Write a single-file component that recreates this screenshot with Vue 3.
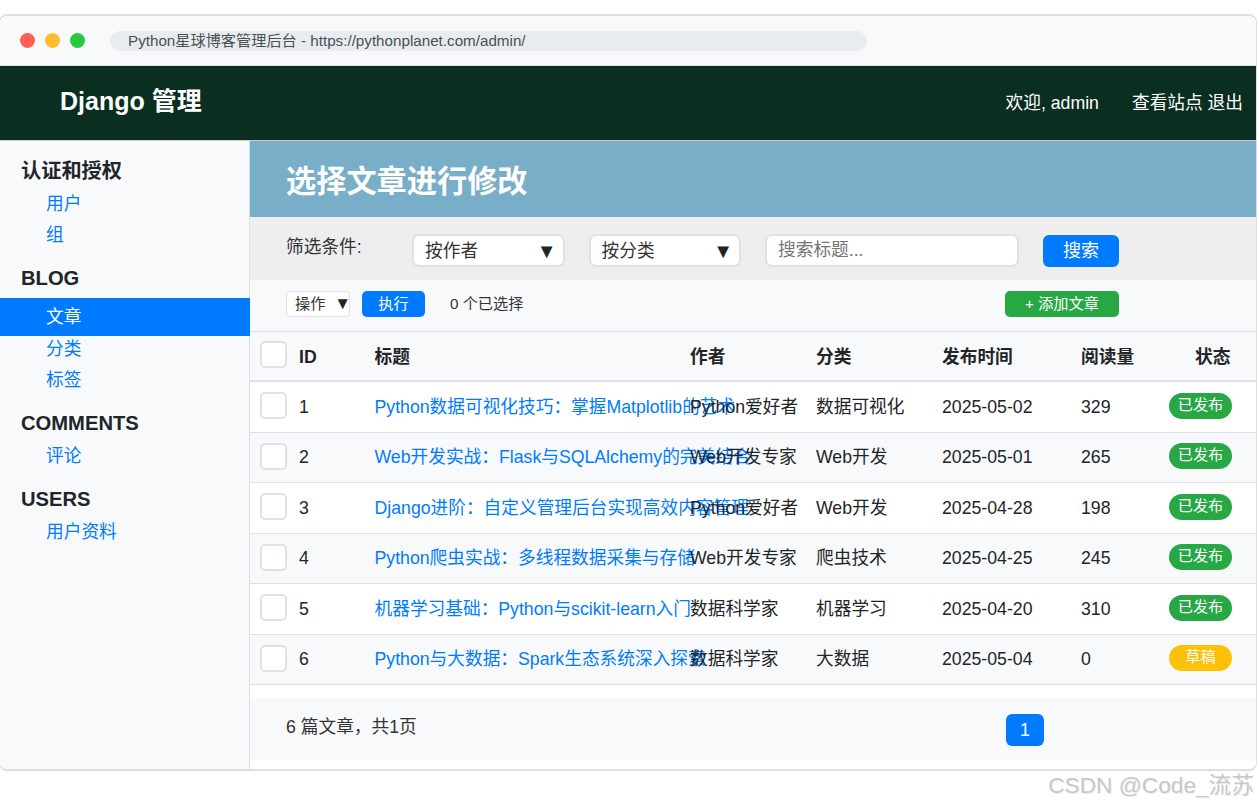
<script setup>
const groups = [
  { title: '认证和授权', links: [{ t: '用户' }, { t: '组' }] },
  { title: 'BLOG', links: [{ t: '文章', active: true }, { t: '分类' }, { t: '标签' }] },
  { title: 'COMMENTS', links: [{ t: '评论' }] },
  { title: 'USERS', links: [{ t: '用户资料' }] },
]
const rows = [
  [1, 'Python数据可视化技巧：掌握Matplotlib的艺术', 'Python爱好者', '数据可视化', '2025-05-02', 329, '已发布'],
  [2, 'Web开发实战：Flask与SQLAlchemy的完美结合', 'Web开发专家', 'Web开发', '2025-05-01', 265, '已发布'],
  [3, 'Django进阶：自定义管理后台实现高效内容管理', 'Python爱好者', 'Web开发', '2025-04-28', 198, '已发布'],
  [4, 'Python爬虫实战：多线程数据采集与存储', 'Web开发专家', '爬虫技术', '2025-04-25', 245, '已发布'],
  [5, '机器学习基础：Python与scikit-learn入门', '数据科学家', '机器学习', '2025-04-20', 310, '已发布'],
  [6, 'Python与大数据：Spark生态系统深入探索', '数据科学家', '大数据', '2025-05-04', 0, '草稿'],
]
</script>

<template>
  <div class="page">
    <div class="window">
      <div class="chrome">
        <span class="dot red"></span>
        <span class="dot yellow"></span>
        <span class="dot green"></span>
        <div class="url">Python星球博客管理后台 - https://pythonplanet.com/admin/</div>
      </div>
      <header class="topbar">
        <div class="logo">Django 管理</div>
        <div class="user">
          <span>欢迎, admin</span>
          <span>查看站点 退出</span>
        </div>
      </header>
      <div class="body">
        <aside class="sidebar">
          <div v-for="g in groups" :key="g.title" class="group">
            <h3>{{ g.title }}</h3>
            <a v-for="l in g.links" :key="l.t" class="side-link" :class="{ active: l.active }">{{ l.t }}</a>
          </div>
        </aside>
        <main class="main">
          <div class="title-bar">选择文章进行修改</div>
          <div class="filters">
            <span class="filter-label">筛选条件:</span>
            <div class="select"><span>按作者</span><span class="arrow">▼</span></div>
            <div class="select"><span>按分类</span><span class="arrow">▼</span></div>
            <div class="search">搜索标题...</div>
            <button class="btn search-btn">搜索</button>
          </div>
          <div class="actions">
            <div class="mini-select"><span>操作</span><span class="mini-arrow">▼</span></div>
            <button class="btn run">执行</button>
            <span class="count">0 个已选择</span>
            <button class="btn add">+ 添加文章</button>
          </div>
          <table class="grid">
            <colgroup>
              <col class="c0" /><col class="c1" /><col class="c2" /><col class="c3" />
              <col class="c4" /><col class="c5" /><col class="c6" /><col class="c7" />
            </colgroup>
            <thead>
              <tr>
                <th><span class="check"></span></th>
                <th>ID</th><th>标题</th><th>作者</th><th>分类</th><th>发布时间</th><th>阅读量</th>
                <th class="status-h">状态</th>
              </tr>
            </thead>
            <tbody>
              <tr v-for="r in rows" :key="r[0]">
                <td><span class="check"></span></td>
                <td>{{ r[0] }}</td>
                <td><a class="title-link">{{ r[1] }}</a></td>
                <td>{{ r[2] }}</td>
                <td>{{ r[3] }}</td>
                <td>{{ r[4] }}</td>
                <td>{{ r[5] }}</td>
                <td><span class="badge" :class="{ draft: r[6] === '草稿' }">{{ r[6] }}</span></td>
              </tr>
            </tbody>
          </table>
          <div class="pager">
            <span class="total">6 篇文章，共1页</span>
            <span class="page-num">1</span>
          </div>
        </main>
      </div>
    </div>
    <div class="watermark">CSDN @Code_流苏</div>
  </div>
</template>

<style>
html, body { margin: 0; background: #fff; overflow: hidden; }
</style>

<style scoped>
.page {
  position: relative;
  width: 1259px;
  height: 806px;
  overflow: hidden;
  background: #fff;
  font-family: "Liberation Sans", "Noto Sans CJK SC", sans-serif;
  font-size: 17.7px;
  line-height: 24px;
  color: #212529;
}
.window {
  box-sizing: border-box;
  width: 1258px;
  height: 757px;
  margin: 14px 0 0 -1px;
  border: 1px solid #dcdee0;
  border-top-width: 2px;
  border-bottom-width: 2px;
  border-radius: 8px;
  background: #fff;
  overflow: hidden;
  display: flex;
  flex-direction: column;
}
.chrome {
  box-sizing: border-box;
  height: 50px;
  flex: none;
  display: flex;
  align-items: center;
  padding-left: 20px;
  background: #f8f9fa;
  border-bottom: 1px solid #dee2e6;
}
.dot { width: 15px; height: 15px; border-radius: 50%; margin-right: 10px; }
.red { background: #ff5f56; }
.yellow { background: #ffbd2e; }
.green { background: #27c93f; }
.url {
  box-sizing: border-box;
  width: 757px;
  height: 20px;
  margin-left: 15px;
  padding-left: 18px;
  border-radius: 10px;
  background: #e9ecef;
  color: #495057;
  font-size: 15.2px;
  line-height: 20px;
}
.topbar {
  flex: none;
  box-sizing: border-box;
  height: 74px;
  background: #0a2e20;
  color: #fff;
  display: flex;
  align-items: center;
  justify-content: space-between;
  padding: 0 13px 0 60px;
}
.logo { font-size: 25px; line-height: 32px; font-weight: 700; margin-top: -5px; }
.user { display: flex; gap: 33px; margin-top: -1px; }
.body { flex: 1; display: flex; min-height: 0; border-top: 1px solid #c9cdd0; }
.sidebar {
  flex: none;
  box-sizing: border-box;
  width: 250px;
  padding-top: 15px;
  background: #f8f9fa;
  border-right: 1px solid #dee2e6;
}
.group { margin-bottom: 13px; }
.group h3 {
  margin: 0 0 2px;
  padding-left: 21px;
  font-size: 20.2px;
  line-height: 30px;
  font-weight: 700;
  color: #212529;
}
.side-link {
  display: block;
  padding: 2px 0 0 46px;
  line-height: 29px;
  color: #007bff;
}
.side-link.active {
  padding-top: 0;
  background: #007bff;
  color: #fff;
  line-height: 38px;
  margin: 5px -1px -3px 0;
}
.main { flex: 1; min-width: 0; background: #fff; }
.title-bar {
  box-sizing: border-box;
  height: 76px;
  padding: 1px 0 0 36px;
  background: #79aec8;
  color: #fff;
  font-size: 30.2px;
  font-weight: 700;
  line-height: 80px;
  overflow: hidden;
}
.filters {
  box-sizing: border-box;
  height: 63px;
  display: flex;
  align-items: center;
  padding: 4px 0 0 36px;
  background: #eee;
}
.filter-label { width: 126px; margin-top: -7px; color: #333; }
.select {
  box-sizing: border-box;
  width: 152.5px;
  height: 33px;
  margin-right: 24px;
  padding: 0 6px 0 11px;
  display: flex;
  align-items: center;
  justify-content: space-between;
  background: #fff;
  border: 2px solid #dee2e6;
  border-radius: 7px;
  color: #333;
}
.arrow { font-size: 20px; color: #212529; }
.search {
  box-sizing: border-box;
  width: 254px;
  height: 33px;
  padding-left: 11px;
  line-height: 29px;
  background: #fff;
  border: 2px solid #dee2e6;
  border-radius: 7px;
  color: #757575;
}
.btn {
  font-family: inherit;
  line-height: 24px;
  border: 0;
  color: #fff;
  padding: 0;
  border-radius: 5px;
}
.search-btn {
  width: 76px;
  height: 32px;
  margin-left: 24px;
  background: #007bff;
  font-size: 18px;
  border-radius: 6px;
}
.actions {
  box-sizing: border-box;
  height: 51px;
  display: flex;
  align-items: center;
  padding: 0 137px 3px 36px;
  background: #f8f9fa;
}
.mini-select {
  box-sizing: border-box;
  width: 64px;
  height: 26px;
  padding-left: 8px;
  display: flex;
  align-items: center;
  justify-content: space-between;
  background: #fff;
  border: 1px solid #dee2e6;
  border-radius: 4px;
  font-size: 15.2px;
  color: #333;
}
.mini-arrow { font-size: 17px; margin-right: -2px; color: #212529; }
.run {
  width: 63px;
  height: 26px;
  margin-left: 12px;
  background: #007bff;
  font-size: 15.2px;
}
.count { margin-left: 25px; font-size: 15.2px; color: #333; }
.add {
  width: 114px;
  height: 26px;
  margin-left: auto;
  background: #28a745;
  font-size: 15.2px;
}
.grid {
  width: 1006px;
  table-layout: fixed;
  border-collapse: collapse;
  border-top: 1px solid #dee2e6;
}
.c0 { width: 49px; }
.c1 { width: 75.5px; }
.c2 { width: 315.5px; }
.c3 { width: 126px; }
.c4 { width: 126px; }
.c5 { width: 139px; }
.c6 { width: 88px; }
.c7 { width: 87px; }
th, td {
  padding: 0;
  text-align: left;
  white-space: nowrap;
  border-bottom: 1px solid #dee2e6;
  vertical-align: middle;
}
th {
  height: 46px;
  padding-top: 2px;
  background: #f8f9fa;
  font-weight: 700;
  border-bottom-width: 2px;
}
td { height: 49.5px; }
th:first-child, td:first-child { padding-left: 10px; }
tbody tr:nth-child(even) td { background: #f8f9fa; }
th.status-h { padding-left: 26px; }
.title-link { color: #007bff; }
.check {
  display: block;
  box-sizing: border-box;
  width: 27px;
  height: 27px;
  margin-top: -2px;
  background: #fff;
  border: 2px solid #dee2e6;
  border-radius: 5px;
}
th .check { margin-top: -6px; }
.badge {
  display: inline-block;
  box-sizing: border-box;
  width: 63px;
  height: 26px;
  background: #28a745;
  color: #fff;
  border-radius: 13px;
  font-size: 15.2px;
  line-height: 23px;
  text-align: center;
  margin-top: -4px;
  vertical-align: middle;
}
.badge.draft { background: #ffc107; }
.pager {
  box-sizing: border-box;
  height: 63px;
  margin-top: 12px;
  display: flex;
  align-items: center;
  padding-left: 36px;
  background: #f8f9fa;
}
.total { width: 720px; margin-top: -3px; color: #333; }
.page-num {
  box-sizing: border-box;
  width: 38px;
  height: 32px;
  margin-top: 2px;
  background: #007bff;
  color: #fff;
  border-radius: 6px;
  text-align: center;
  line-height: 32px;
}
.watermark {
  position: absolute;
  right: 5px;
  bottom: 7px;
  font-size: 22.7px;
  color: #c8c8c8;
  line-height: 28px;
  text-shadow: 1px 1px 1px #ececec;
}
</style>
